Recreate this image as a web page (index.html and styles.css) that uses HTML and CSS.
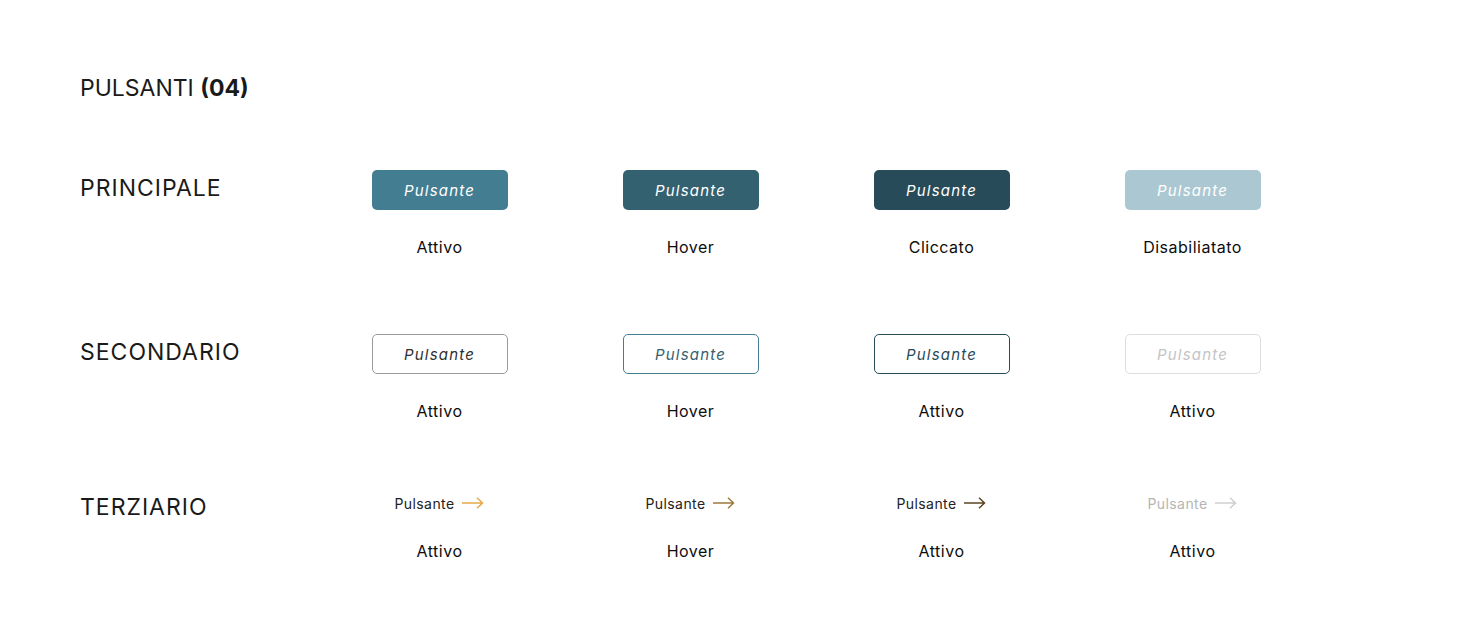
FILE: index.html
```html
<!DOCTYPE html>
<html lang="it">
<head>
<meta charset="utf-8">
<title>Pulsanti</title>
<link rel="stylesheet" href="styles.css">
</head>
<body>
<main class="page">
  <h1 class="title">PULSANTI <b>(04)</b></h1>

  <section class="row row-primary">
    <h2 class="row-label">PRINCIPALE</h2>
    <div class="cell"><span class="btn btn-p1">Pulsante</span><span class="state">Attivo</span></div>
    <div class="cell"><span class="btn btn-p2">Pulsante</span><span class="state">Hover</span></div>
    <div class="cell"><span class="btn btn-p3">Pulsante</span><span class="state">Cliccato</span></div>
    <div class="cell"><span class="btn btn-p4">Pulsante</span><span class="state">Disabiliatato</span></div>
  </section>

  <section class="row row-secondary">
    <h2 class="row-label">SECONDARIO</h2>
    <div class="cell"><span class="btn btn-s btn-s1">Pulsante</span><span class="state">Attivo</span></div>
    <div class="cell"><span class="btn btn-s btn-s2">Pulsante</span><span class="state">Hover</span></div>
    <div class="cell"><span class="btn btn-s btn-s3">Pulsante</span><span class="state">Attivo</span></div>
    <div class="cell"><span class="btn btn-s btn-s4">Pulsante</span><span class="state">Attivo</span></div>
  </section>

  <section class="row row-tertiary">
    <h2 class="row-label">TERZIARIO</h2>
    <div class="cell"><span class="link link-1">Pulsante <svg class="arrow" viewBox="0 0 22 12" width="22" height="12"><path d="M0 6H20.5M15 0.8L20.5 6L15 11.2" fill="none" stroke="currentColor" stroke-width="1.5"/></svg></span><span class="state">Attivo</span></div>
    <div class="cell"><span class="link link-2">Pulsante <svg class="arrow" viewBox="0 0 22 12" width="22" height="12"><path d="M0 6H20.5M15 0.8L20.5 6L15 11.2" fill="none" stroke="currentColor" stroke-width="1.5"/></svg></span><span class="state">Hover</span></div>
    <div class="cell"><span class="link link-3">Pulsante <svg class="arrow" viewBox="0 0 22 12" width="22" height="12"><path d="M0 6H20.5M15 0.8L20.5 6L15 11.2" fill="none" stroke="currentColor" stroke-width="1.5"/></svg></span><span class="state">Attivo</span></div>
    <div class="cell"><span class="link link-4">Pulsante <svg class="arrow" viewBox="0 0 22 12" width="22" height="12"><path d="M0 6H20.5M15 0.8L20.5 6L15 11.2" fill="none" stroke="currentColor" stroke-width="1.5"/></svg></span><span class="state">Attivo</span></div>
  </section>
</main>
</body>
</html>
```
FILE: styles.css
```css
* { box-sizing: border-box; }
body {
  margin: 0;
  background: #ffffff;
  color: #1a1a1a;
  font-family: Inter, "Noto Sans", "Liberation Sans", sans-serif;
}
.page {
  padding: 74px 0 0 80px;
}
.title {
  margin: 0;
  font-size: 23px;
  line-height: 28px;
  font-weight: 400;
  letter-spacing: 0;
}
.title b { font-weight: 700; }

.row {
  display: grid;
  grid-template-columns: 234px repeat(4, 251px);
  align-items: start;
}
.row-primary { margin-top: 68px; }
.row-secondary { margin-top: 77px; }
.row-tertiary { margin-top: 71px; }

.row-label {
  margin: 0;
  font-size: 23px;
  font-weight: 400;
  letter-spacing: 1px;
  line-height: 36px;
}
.row-tertiary .row-label { margin-top: -3px; }

.cell {
  display: flex;
  flex-direction: column;
  align-items: center;
  gap: 27px;
}
.state {
  font-size: 16px;
  line-height: 20px;
  font-weight: 400;
  letter-spacing: 0.5px;
  color: #0d0d0d;
}
.btn {
  display: flex;
  align-items: center;
  justify-content: center;
  width: 136px;
  height: 40px;
  border-radius: 5px;
  font-style: italic;
  font-size: 15px;
  letter-spacing: 1.2px;
  color: #ffffff;
}
.btn-p1 { background: #437d92; }
.btn-p2 { background: #34616f; }
.btn-p3 { background: #284b59; }
.btn-p4 { background: #abc8d2; }

.btn-s { background: #ffffff; border: 1px solid #9a9a9a; color: #333333; }
.btn-s1 { border-color: #9a9a9a; color: #2f2f2f; }
.btn-s2 { border-color: #437d92; color: #34616f; }
.btn-s3 { border-color: #284b59; color: #284b59; }
.btn-s4 { border-color: #dddddd; color: #c4c4c4; }

.link {
  display: flex;
  align-items: center;
  gap: 8px;
  height: 22px;
  font-size: 14px;
  letter-spacing: 0.4px;
  color: #222222;
}
.arrow { display: block; }
.link-1 .arrow { color: #e4a94a; }
.link-2 .arrow { color: #9d7a3b; }
.link-3 .arrow { color: #5c4526; }
.link-4 { color: #b5b5b5; }
.link-4 .arrow { color: #cfcfcf; }
```
